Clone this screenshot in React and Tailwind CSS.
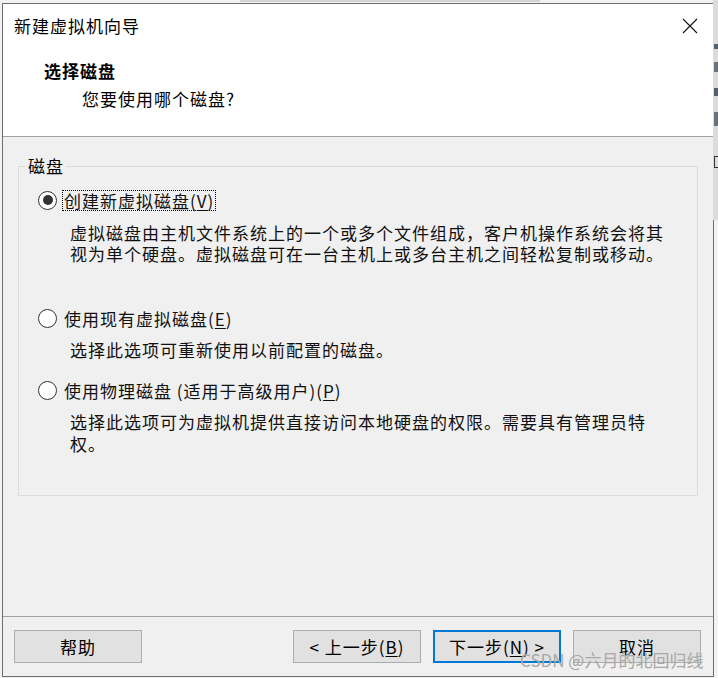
import React from "react";

function Radio({ checked }) {
  return (
    <span className="flex h-[19px] w-[19px] shrink-0 items-center justify-center rounded-full border border-[#333333] bg-white">
      {checked ? <span className="h-[10px] w-[10px] rounded-full bg-[#333333]" /> : null}
    </span>
  );
}

function Btn({ children, primary }) {
  return (
    <div
      className={
        "flex h-[33px] w-[128px] items-center justify-center bg-[#e1e1e1] text-[17px] tracking-[1px] " +
        (primary ? "border-2 border-[#0078d7]" : "border border-[#adadad]")
      }
    >
      {children}
    </div>
  );
}

export default function App() {
  return (
    <div className="relative h-[678px] w-[718px] overflow-hidden bg-[#f2f2f2] font-['Noto_Sans_CJK_SC','Noto_Sans',sans-serif] text-black">
      {/* desktop background fragments */}
      <div className="absolute right-0 top-0 h-[220px] w-[5px] bg-[#dcdcdc]" />
      <div className="absolute right-0 top-[44px] h-[5px] w-[4px] bg-[#55606b]" />
      <div className="absolute right-0 top-[62px] h-[10px] w-[4px] bg-[#6a737c]" />
      <div className="absolute right-0 top-[88px] h-[8px] w-[4px] bg-[#55606b]" />
      <div className="absolute right-0 top-[112px] h-[14px] w-[4px] bg-[#6a737c]" />
      <div className="absolute right-0 top-[156px] h-[12px] w-[4px] border-y border-l border-[#333]" />
      <div className="absolute left-[240px] top-0 h-[2px] w-[300px] bg-[#d4d4d4]" />

      <div className="ml-[2px] mt-[3px] flex h-[674px] w-[712px] flex-col border border-[#6e6e6e] bg-[#f0f0f0]">
        {/* header */}
        <div className="h-[133px] shrink-0 border-b border-[#a0a0a0] bg-white">
          <div className="flex h-[42px] items-center justify-between pl-[11px] pr-[15px]">
            <span className="text-[17px] leading-[21px] tracking-[1px]">新建虚拟机向导</span>
            <svg width="16" height="16" viewBox="0 0 16 16" className="mt-[1px]">
              <path d="M1 1 L15 15 M15 1 L1 15" stroke="#111" strokeWidth="1.1" fill="none" />
            </svg>
          </div>
          <div className="mt-[14px] pl-[41px] text-[17px] font-bold leading-[22px] tracking-[1px]">选择磁盘</div>
          <div className="mt-[6px] pl-[79px] text-[17px] leading-[22px] tracking-[1px]">您要使用哪个磁盘?</div>
        </div>

        {/* body */}
        <div className="flex-1 pl-[15px] pt-[29px]">
          <div className="relative h-[330px] w-[680px] border border-[#dcdcdc]">
            <span className="absolute left-[7px] top-[-12px] bg-[#f0f0f0] px-[2px] text-[17px] leading-[22px] tracking-[1px]">
              磁盘
            </span>
            <div className="pl-[19px] pt-[22px] text-[17px] tracking-[1px] text-[#111]">
              <div className="flex h-[22px] items-center">
                <Radio checked />
                <span className="ml-[5px] border border-dotted border-black px-[1px] leading-[19px]">
                  创建新虚拟磁盘(<span className="underline underline-offset-2">V</span>)
                </span>
              </div>
              <div className="mt-[11px] pl-[32px] leading-[21px]">
                虚拟磁盘由主机文件系统上的一个或多个文件组成，客户机操作系统会将其
                <br />
                视为单个硬盘。虚拟磁盘可在一台主机上或多台主机之间轻松复制或移动。
              </div>

              <div className="mt-[43px] flex h-[22px] items-center">
                <Radio />
                <span className="ml-[7px] leading-[21px]">
                  使用现有虚拟磁盘(<span className="underline underline-offset-2">E</span>)
                </span>
              </div>
              <div className="mt-[10px] pl-[32px] leading-[21px]">选择此选项可重新使用以前配置的磁盘。</div>

              <div className="mt-[19px] flex h-[22px] items-center">
                <Radio />
                <span className="ml-[7px] leading-[21px]">
                  使用物理磁盘 (适用于高级用户)(<span className="underline underline-offset-2">P</span>)
                </span>
              </div>
              <div className="mt-[10px] pl-[32px] leading-[22px]">
                选择此选项可为虚拟机提供直接访问本地硬盘的权限。需要具有管理员特
                <br />
                权。
              </div>
            </div>
          </div>
        </div>

        {/* footer */}
        <div className="flex h-[60px] shrink-0 items-start justify-between border-t border-[#a0a0a0] pl-[11px] pr-[12px] pt-[13px]">
          <Btn>帮助</Btn>
          <div className="flex gap-[12px]">
            <Btn>
              &lt; 上一步(<span className="underline underline-offset-2">B</span>)
            </Btn>
            <Btn primary>
              下一步(<span className="underline underline-offset-2">N</span>) &gt;
            </Btn>
            <Btn>取消</Btn>
          </div>
        </div>
      </div>

      <div className="absolute left-[520px] top-[649px] text-[17px] leading-[22px] text-[#a8a8a8]">
        CSDN @六月的北回归线
      </div>
    </div>
  );
}
